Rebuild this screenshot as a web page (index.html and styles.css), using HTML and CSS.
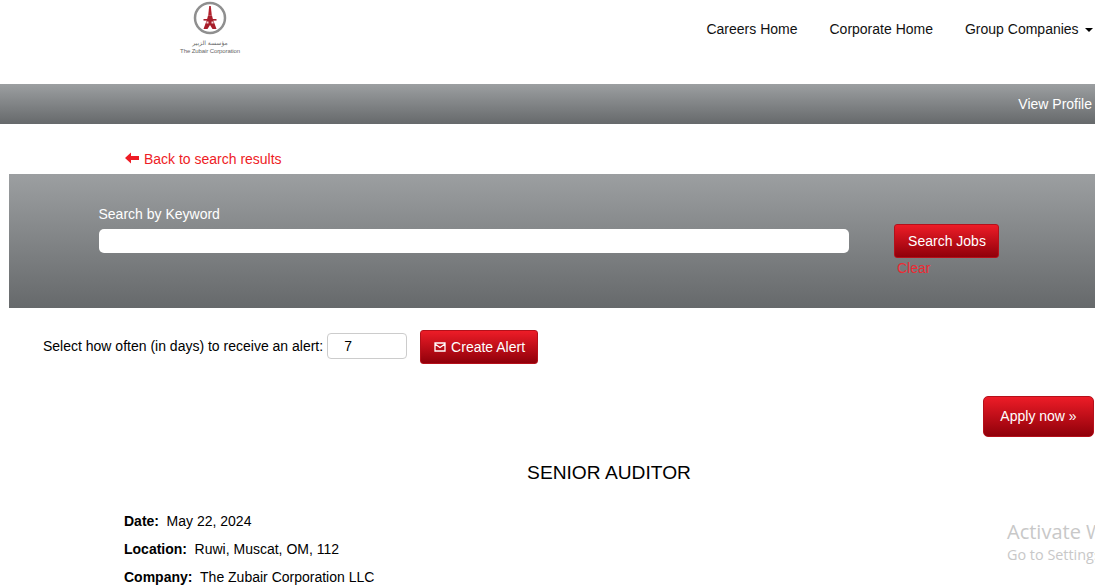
FILE: index.html
```html
<!DOCTYPE html>
<html>
<head>
    <link rel="stylesheet" href="styles.css">
</head>
<body>
    <header class="site-header">
        <a class="logo" href="#">
            <svg class="logo-mark" width="34" height="34" viewBox="0 0 34 34">
                <circle cx="17" cy="17" r="15" fill="#fff" stroke="#8f8f8f" stroke-width="2.500"/>
                <path d="M16.200 5h1.600l1 9.500h-3.600z" fill="#b3212c"/>
                <path d="M15 14.500h4l1 4 3.500 9.500h-4l-2.500-4-2.500 4h-4L14 18.500z" fill="#a81e2a"/>
                <path d="M10.500 18h13v1.600h-13z" fill="#a81e2a"/>
                <path d="M13.500 20.500h2v2h-2zM18.500 20.500h2v2h-2z" fill="#f3d6d6"/>
            </svg>
            <span class="logo-arabic" dir="rtl" lang="ar">مؤسسة الزبير</span>
            <span class="logo-name">The Zubair Corporation</span>
        </a>
        <nav class="main-nav">
            <a href="#">Careers Home</a>
            <a href="#">Corporate Home</a>
            <a href="#">Group Companies <span class="caret"></span></a>
        </nav>
    </header>

    <div class="profile-bar">
        <a href="#">View Profile</a>
    </div>

    <div class="back-row">
        <a class="back-link" href="#">
            <svg width="14" height="12" viewBox="0 0 14 12"><path d="M0 6l6-5.500v3.500h8v4H6v3.500z" fill="#ee1c25"/></svg>
            Back to search results
        </a>
    </div>

    <section class="search-panel">
        <div class="search-field">
            <label for="keyword">Search by Keyword</label>
            <input type="text" id="keyword">
        </div>
        <div class="search-actions">
            <button class="button search-btn">Search Jobs</button>
            <a class="clear-link" href="#">Clear</a>
        </div>
    </section>

    <div class="alert-row">
        <label for="alertDays">Select how often (in days) to receive an alert:</label>
        <input type="text" id="alertDays" value="7">
        <button class="button alert-btn">
            <svg width="12" height="10" viewBox="0 0 12 10"><path d="M1 1h10v8H1z M1 2l5 3.500L11 2" fill="none" stroke="#fff" stroke-width="1.300"/></svg>
            Create Alert
        </button>
    </div>

    <div class="apply-row">
        <a class="button apply-btn" href="#">Apply now »</a>
    </div>

    <h1 class="job-title">SENIOR AUDITOR</h1>

    <div class="job-meta">
        <p><b>Date:</b>May 22, 2024</p>
        <p><b>Location:</b>Ruwi, Muscat, OM, 112</p>
        <p><b>Company:</b>The Zubair Corporation LLC</p>
    </div>

    <div class="activate-note">
        <div class="activate-title">Activate Windows</div>
        <div class="activate-sub">Go to Settings to activate Windows.</div>
    </div>
</body>
</html>
```

FILE: styles.css
```css
html, body {
    overflow: hidden;
    height: 586px;
}

body {
    margin: 0;
    font-family: "Liberation Sans", Arial, sans-serif;
    font-size: 14px;
    color: #000;
    background: #fff;
    position: relative;
}

a {
    color: inherit;
    text-decoration: none;
}

.site-header {
    height: 84px;
    display: flex;
    justify-content: space-between;
}

.logo {
    width: 62px;
    margin-left: 179px;
    padding-top: 1px;
    display: flex;
    flex-direction: column;
    align-items: center;
    color: #666;
}

.logo-arabic {
    font-family: "DejaVu Sans", sans-serif;
    font-size: 6px;
    line-height: 8px;
    margin-top: 4px;
    white-space: nowrap;
}

.logo-name {
    font-size: 6px;
    line-height: 8px;
    white-space: nowrap;
    letter-spacing: -0.1px;
}

.main-nav {
    display: flex;
    gap: 32px;
    padding: 21px 2.5px 0 0;
    line-height: 16px;
    color: #111;
}

.caret {
    display: inline-block;
    width: 0;
    height: 0;
    margin-left: 2px;
    vertical-align: middle;
    border-top: 4px solid #000;
    border-left: 4px solid transparent;
    border-right: 4px solid transparent;
}

.profile-bar {
    height: 40px;
    display: flex;
    align-items: center;
    justify-content: flex-end;
    padding-right: 3px;
    color: #fff;
    background: linear-gradient(#9c9fa1, #66696b);
}

.back-row {
    height: 50px;
    padding-left: 125px;
    box-sizing: border-box;
    padding-top: 27px;
    line-height: 16px;
}

.back-link {
    color: #ee1c25;
}

.back-link svg {
    margin-right: 1px;
}

.search-panel {
    height: 134px;
    margin-left: 9px;
    box-sizing: border-box;
    padding: 32px 96px 0 90px;
    display: flex;
    gap: 45px;
    background: linear-gradient(#9c9fa1, #66696b);
}

.search-field {
    flex: 1;
}

.search-field label {
    display: block;
    margin: 0 0 7px -0.5px;
    color: #fff;
    line-height: 16px;
}

.search-field input {
    display: block;
    width: 100%;
    height: 24px;
    box-sizing: border-box;
    border: 0;
    border-radius: 5px;
    background: #fff;
}

.search-actions {
    width: 105px;
    padding-top: 18px;
}

.button {
    display: block;
    box-sizing: border-box;
    font-family: inherit;
    font-size: 14px;
    color: #fff;
    text-align: center;
    border: 1px solid #b5101a;
    border-radius: 3px;
    background: linear-gradient(#ed1c27, #90000a);
}

.search-btn {
    width: 105px;
    height: 34px;
    padding: 0 0 0 1px;
}

.clear-link {
    display: block;
    margin: 2px 0 0 3px;
    line-height: 16px;
    color: #ee2a33;
}

.alert-row {
    height: 88px;
    box-sizing: border-box;
    padding: 22px 0 0 43px;
    display: flex;
    align-items: flex-start;
}

.alert-row label {
    line-height: 16px;
    margin-top: 8px;
}

.alert-row input {
    width: 80px;
    height: 26px;
    box-sizing: border-box;
    margin: 3px 0 0 4px;
    padding: 0 16px;
    border: 1px solid #ccc;
    border-radius: 4px;
    font-family: inherit;
    font-size: 14px;
    color: #000;
}

.alert-btn {
    width: 118px;
    height: 34px;
    margin-left: 13px;
    padding: 0 0 0 1px;
}

.alert-btn svg {
    margin-right: 1px;
}

.apply-row {
    display: flex;
    justify-content: flex-end;
    padding-right: 1px;
}

.apply-btn {
    width: 111px;
    height: 41px;
    line-height: 39px;
    border-radius: 5px;
}

.job-title {
    margin: 24px 0 0 122px;
    width: 974px;
    font-size: 19.2px;
    font-weight: normal;
    line-height: 24px;
    text-align: center;
}

.job-meta {
    margin: 28px 0 0 124px;
}

.job-meta p {
    margin: 0 0 12px;
    line-height: 16px;
}

.job-meta b {
    margin-right: 7.6px;
}

.activate-note {
    position: absolute;
    left: 1007px;
    top: 519px;
    white-space: nowrap;
    font-family: "Open Sans", sans-serif;
    color: #c8c8c8;
}

.activate-title {
    font-size: 20px;
    line-height: 26px;
}

.activate-sub {
    font-size: 14.4px;
    line-height: 20px;
}
```
